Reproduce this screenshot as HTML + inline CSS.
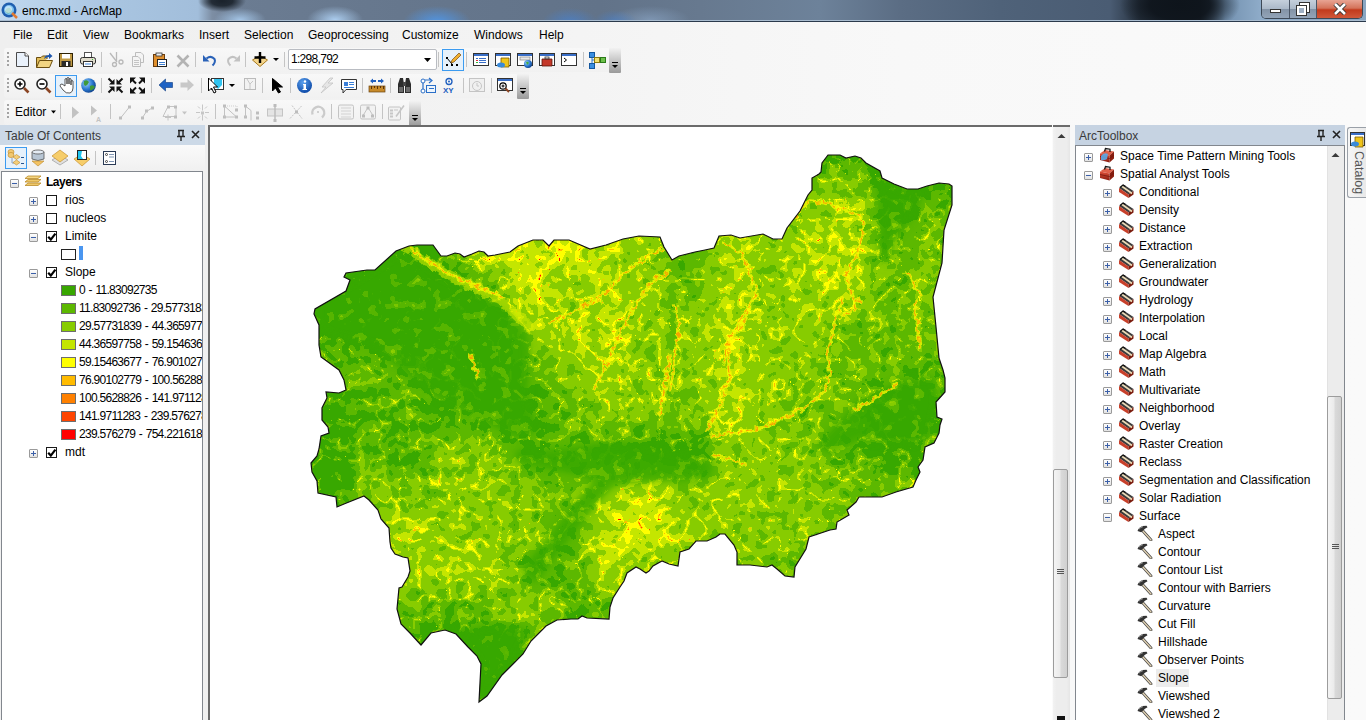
<!DOCTYPE html>
<html><head><meta charset="utf-8">
<style>
*{margin:0;padding:0;box-sizing:border-box}
html,body{width:1366px;height:720px;overflow:hidden;background:linear-gradient(90deg,#efefef 0px,#f3f3f3 500px,#f8f8f8 900px,#fafafa 1366px);font-family:"Liberation Sans",sans-serif;font-size:12px;color:#000}
.a{position:absolute}
#title{left:0;top:0;width:1366px;height:22px;background:
radial-gradient(ellipse 24px 11px at 222px 1px,#1a222b 0%,rgba(26,34,43,.9) 45%,rgba(26,34,43,0) 100%),
radial-gradient(ellipse 26px 12px at 240px 20px,rgba(170,205,240,.9) 0%,rgba(170,205,240,0) 100%),
radial-gradient(ellipse 28px 14px at 335px 20px,rgba(175,210,245,.95) 0%,rgba(175,210,245,0) 100%),
radial-gradient(ellipse 34px 16px at 437px 22px,rgba(80,150,230,.95) 0%,rgba(80,150,230,0) 100%),
radial-gradient(ellipse 28px 14px at 570px 22px,rgba(70,130,210,.7) 0%,rgba(70,130,210,0) 100%),
radial-gradient(ellipse 22px 12px at 615px 22px,rgba(70,130,210,.6) 0%,rgba(70,130,210,0) 100%),
radial-gradient(ellipse 40px 14px at 650px 20px,rgba(150,180,215,.5) 0%,rgba(150,180,215,0) 100%),
radial-gradient(ellipse 60px 30px at 1180px 5px,#0e141b 0%,rgba(14,20,27,.9) 50%,rgba(14,20,27,0) 100%),
linear-gradient(90deg,#c0d8ef 0px,#a8c4e0 120px,#a2bedb 198px,#7d8ea4 212px,#6b7c92 235px,#66778d 400px,#627389 600px,#67798f 700px,#6d829a 820px,#5b6d84 900px,#4f6279 1000px,#4a5c73 1110px,#26313e 1140px,#1a222c 1200px,#7391b0 1225px,#8eabc8 1260px,#8aa6c2 1366px);}
#title .bot{left:0;top:20px;width:1366px;height:1px;background:#a9bccf}
#title .bot2{left:0;top:21px;width:1366px;height:1px;background:#2b3a4c}
.ttxt{left:22px;top:4px;font-size:12px;color:#000;white-space:nowrap}
.menu{top:28px;font-size:12px;white-space:nowrap}
.tb{background:#f5f5f5;border-radius:3px}
.sep{width:1px;background:#c6c6c6}
.grip{width:2px;background:repeating-linear-gradient(180deg,#a0a0a0 0 2px,transparent 2px 4px)}
.chev{background:linear-gradient(180deg,#f0f0f0,#9d9d9d);border-radius:0 3px 3px 0}
.panelhdr{font-size:12px;color:#3a3a3a;white-space:nowrap}
.tree{background:#fff}
.row{white-space:nowrap;font-size:12px}
.pm{width:9px;height:9px;border:1px solid #9a9a9a;background:linear-gradient(180deg,#fff,#e2e2e2);border-radius:1px}
.pm::before{content:"";position:absolute;left:1px;top:3px;width:5px;height:1px;background:#3b5fa8}
.pm.p::after{content:"";position:absolute;left:3px;top:1px;width:1px;height:5px;background:#3b5fa8}
.cb{width:11px;height:11px;border:1px solid #1a1a1a;background:#fff}
.num{letter-spacing:-0.72px;word-spacing:1px}
.sw{width:15px;height:11px;border:1px solid #6e6e6e}
</style></head><body>
<!-- TITLE BAR -->
<div id="title" class="a">
  <div class="a bot"></div><div class="a bot2"></div>
  <svg class="a" style="left:1px;top:2px" width="18" height="18" viewBox="0 0 18 18">
    <circle cx="8" cy="8" r="7.5" fill="#1f5fb0"/><circle cx="8" cy="8" r="5" fill="#7fc4ef"/><path d="M4 9 Q6 5 9 6 L11 9 Q9 12 6 11Z" fill="#3a9d3a" opacity=".8"/><circle cx="7.5" cy="7.5" r="3.6" fill="#d6eeff" opacity=".75"/><path d="M11 11 L16 16" stroke="#e07a30" stroke-width="2.5"/>
  </svg>
  <div class="a ttxt">emc.mxd - ArcMap</div>
  <!-- window buttons -->
  <div class="a" style="left:1261px;top:0;width:102px;height:19px;border:1px solid #3c4856;border-top:none;border-radius:0 0 5px 5px;overflow:hidden">
    <div class="a" style="left:0;top:0;width:27px;height:18px;background:linear-gradient(180deg,#c5d0dc 0,#aab8c8 50%,#8393a6 51%,#93a4b8 100%)"></div>
    <div class="a" style="left:27px;top:0;width:1px;height:18px;background:#4a5666"></div>
    <div class="a" style="left:28px;top:0;width:26px;height:18px;background:linear-gradient(180deg,#c5d0dc 0,#aab8c8 50%,#8393a6 51%,#93a4b8 100%)"></div>
    <div class="a" style="left:54px;top:0;width:1px;height:18px;background:#4a5666"></div>
    <div class="a" style="left:55px;top:0;width:47px;height:18px;background:linear-gradient(180deg,#e8a493 0,#d4735a 45%,#c23a1c 55%,#d0583a 100%)"></div>
    <div class="a" style="left:8px;top:9px;width:11px;height:4px;background:#fff;border:1px solid #333"></div>
    <div class="a" style="left:38px;top:3px;width:9px;height:9px;border:2px solid #fff;outline:1px solid #333"></div>
    <div class="a" style="left:35px;top:6px;width:9px;height:9px;border:2px solid #fff;outline:1px solid #333;background:#9fb0c4"></div>
    <svg class="a" style="left:70px;top:3px" width="16" height="12" viewBox="0 0 16 12"><path d="M3 1 L13 11 M13 1 L3 11" stroke="#333" stroke-width="4.4"/><path d="M3 1 L13 11 M13 1 L3 11" stroke="#fff" stroke-width="2.6"/></svg>
  </div>
</div>
<!-- MENU -->
<div class="a menu" style="left:13px">File</div>
<div class="a menu" style="left:47px">Edit</div>
<div class="a menu" style="left:83px">View</div>
<div class="a menu" style="left:124px">Bookmarks</div>
<div class="a menu" style="left:199px">Insert</div>
<div class="a menu" style="left:244px">Selection</div>
<div class="a menu" style="left:308px">Geoprocessing</div>
<div class="a menu" style="left:402px">Customize</div>
<div class="a menu" style="left:474px">Windows</div>
<div class="a menu" style="left:539px">Help</div>

<!-- TOOLBARS placeholder -->
<div class="a" style="left:4px;top:48px;width:606px;height:24px;background:linear-gradient(180deg,#f8f8f8,#f1f1f1);border-radius:3px 0 0 3px"></div>
<div class="a" style="left:4px;top:74px;width:514px;height:24px;background:linear-gradient(180deg,#f8f8f8,#f1f1f1);border-radius:3px 0 0 3px"></div>
<div class="a" style="left:4px;top:100px;width:406px;height:25px;background:linear-gradient(180deg,#f8f8f8,#f1f1f1);border-radius:3px 0 0 3px"></div>
<!-- combo -->
<div class="a" style="left:288px;top:49px;width:149px;height:21px;background:#fff;border:1px solid #b9bcc2;border-radius:2px"></div>
<div class="a" style="left:291px;top:52px;font-size:12px;white-space:nowrap;letter-spacing:-0.7px">1:298,792</div>
<div class="a" style="left:15px;top:105px;font-size:12px;white-space:nowrap">Editor</div>
<svg class="a" style="left:0;top:44px" width="640" height="82" viewBox="0 44 640 82">
<defs>
<linearGradient id="chg" x1="0" y1="0" x2="0" y2="1"><stop offset="0" stop-color="#f2f2f2"/><stop offset="1" stop-color="#9a9a9a"/></linearGradient>
<radialGradient id="glb" cx=".35" cy=".35" r=".7"><stop offset="0" stop-color="#9fd3ff"/><stop offset=".6" stop-color="#2a78d0"/><stop offset="1" stop-color="#0d3f8a"/></radialGradient>
<radialGradient id="inf" cx=".4" cy=".3" r=".7"><stop offset="0" stop-color="#5aa0ee"/><stop offset="1" stop-color="#0d4aa8"/></radialGradient>
</defs>
<!-- grips -->
<g fill="#a3a3a3">
<rect x="7" y="52" width="2" height="2"/><rect x="7" y="56" width="2" height="2"/><rect x="7" y="60" width="2" height="2"/><rect x="7" y="64" width="2" height="2"/>
<rect x="7" y="78" width="2" height="2"/><rect x="7" y="82" width="2" height="2"/><rect x="7" y="86" width="2" height="2"/><rect x="7" y="90" width="2" height="2"/>
<rect x="7" y="104" width="2" height="2"/><rect x="7" y="108" width="2" height="2"/><rect x="7" y="112" width="2" height="2"/><rect x="7" y="116" width="2" height="2"/>
</g>
<!-- separators -->
<g fill="#c4c4c4">
<rect x="101" y="52" width="1" height="15"/><rect x="195" y="52" width="1" height="15"/><rect x="245" y="52" width="1" height="15"/><rect x="284" y="52" width="1" height="15"/><rect x="438" y="52" width="1" height="15"/><rect x="466" y="52" width="1" height="15"/><rect x="583" y="52" width="1" height="15"/>
<rect x="101" y="78" width="1" height="15"/><rect x="151" y="78" width="1" height="15"/><rect x="201" y="78" width="1" height="15"/><rect x="262" y="78" width="1" height="15"/><rect x="290" y="78" width="1" height="15"/><rect x="362" y="78" width="1" height="15"/><rect x="390" y="78" width="1" height="15"/><rect x="463" y="78" width="1" height="15"/><rect x="491" y="78" width="1" height="15"/>
<rect x="60" y="104" width="1" height="15"/><rect x="110" y="104" width="1" height="15"/><rect x="215" y="104" width="1" height="15"/><rect x="331" y="104" width="1" height="15"/><rect x="382" y="104" width="1" height="15"/>
</g>
<!-- chevrons -->
<g>
<rect x="609" y="48" width="12" height="25" fill="url(#chg)" rx="1"/><rect x="612" y="62" width="6" height="1" fill="#000"/><path d="M612 65 H618 L615 68Z" fill="#000"/>
<rect x="517" y="74" width="12" height="25" fill="url(#chg)" rx="1"/><rect x="520" y="88" width="6" height="1" fill="#000"/><path d="M520 91 H526 L523 94Z" fill="#000"/>
<rect x="409" y="101" width="12" height="25" fill="url(#chg)" rx="1"/><rect x="412" y="115" width="6" height="1" fill="#000"/><path d="M412 118 H418 L415 121Z" fill="#000"/>
</g>
<!-- ROW 1 -->
<path d="M16.5 52.5 H25 L28.5 56 V66.5 H16.5Z" fill="#e9f1fb" stroke="#4a4a4a"/><path d="M25 52.5 V56 H28.5" fill="#fff" stroke="#4a4a4a"/>
<path d="M36.5 67.5 V57.5 H41 L42.5 56 H47 V59" fill="#e2bd5a" stroke="#6b4e10"/><path d="M36.5 67.5 L39.5 60.5 H52.5 L49.5 67.5Z" fill="#f2d582" stroke="#6b4e10"/><path d="M44 59 Q45 55 49 55 V53 L52.5 56 L49 59 V57 Q46.5 57 44 59Z" fill="#1d56ad"/>
<rect x="59.5" y="53.5" width="13" height="13" fill="#c09a45" stroke="#2d2104"/><rect x="62" y="54" width="8" height="4.5" fill="#fff"/><rect x="61.5" y="61" width="9" height="5.5" fill="#2a2a2a"/><rect x="66" y="62" width="2" height="4" fill="#fff"/>
<rect x="84.5" y="52.5" width="7" height="6" fill="#fff" stroke="#555"/><rect x="80.5" y="57.5" width="15" height="6.5" rx="2" fill="#e0dccd" stroke="#2e2e2e"/><rect x="83.5" y="61.5" width="9" height="5" fill="#fff" stroke="#333"/><rect x="85" y="63.5" width="6" height="1" fill="#3d82d6"/><rect x="92" y="59" width="1" height="1" fill="#39c439"/>
<g stroke="#b9b9b9" fill="none" stroke-width="1.3"><path d="M110 53 L117 62"/><path d="M116.5 52 V61"/><circle cx="114.5" cy="64.5" r="2"/><circle cx="121" cy="62" r="2"/></g>
<g stroke="#bdbdbd" fill="#f4f4f4"><path d="M135.5 52.5 H141 L143.5 55 V62.5 H135.5Z"/><path d="M132.5 56.5 H138 L140.5 59 V66.5 H132.5Z"/></g><g fill="#c4c4c4"><rect x="134" y="60" width="5" height="1"/><rect x="134" y="62" width="5" height="1"/><rect x="134" y="64" width="5" height="1"/></g>
<rect x="153.5" y="54.5" width="11" height="12" fill="#e0902e" stroke="#6a3c0c"/><rect x="156" y="53" width="6" height="3" fill="#eee" stroke="#333" stroke-width=".8"/><rect x="157.5" y="59.5" width="9" height="7" fill="#fff" stroke="#222"/><rect x="159" y="62" width="6" height="1" fill="#3f7fd0"/><rect x="159" y="64" width="6" height="1" fill="#3f7fd0"/>
<path d="M177.5 55.5 L188.5 66.5 M188.5 55.5 L177.5 66.5" stroke="#b3b3b3" stroke-width="2.6"/>
<path d="M206.5 58.5 Q211 55 214.5 59 Q216 62 212.5 65.5" stroke="#2a62b8" stroke-width="2" fill="none"/><path d="M203 55 V61.5 H209.5Z" fill="#2a62b8"/>
<path d="M236.5 58.5 Q232 55 228.5 59 Q227 62 230.5 65.5" stroke="#c2c2c2" stroke-width="2" fill="none"/><path d="M240 55 V61.5 H233.5Z" fill="#c2c2c2"/>
<path d="M252.5 60 L260 55.5 L267.5 60 L260 66.5Z" fill="#f4d58c" stroke="#a87a1e"/><path d="M260 52 V63 M254.5 57.5 H265.5" stroke="#000" stroke-width="2.4"/>
<path d="M273 58 H279 L276 61Z" fill="#000"/>
<path d="M424 58 H431 L427.5 62Z" fill="#000"/>
<rect x="442.5" y="49.5" width="21" height="21" fill="#e6f1fb" stroke="#3c9bf0"/>
<g fill="#000"><rect x="446" y="57" width="2" height="2"/><rect x="446" y="64" width="2" height="2"/><rect x="451" y="64" width="2" height="2"/><rect x="456" y="64" width="2" height="2"/></g><path d="M447 58 L452 64" stroke="#000"/><path d="M452 60 L459 53 L461 55 L454 62 L451 63Z" fill="#f0b030" stroke="#7a4a10" stroke-width=".7"/>
<g stroke="#333" fill="#fff"><rect x="473.5" y="53.5" width="15" height="12"/><rect x="495.5" y="53.5" width="15" height="12"/><rect x="517.5" y="53.5" width="15" height="12"/><rect x="539.5" y="53.5" width="15" height="12"/><rect x="561.5" y="53.5" width="15" height="12"/></g>
<g fill="#3a6fc8"><rect x="474" y="54" width="14" height="2"/><rect x="496" y="54" width="14" height="2"/><rect x="518" y="54" width="14" height="2"/><rect x="540" y="54" width="14" height="2"/><rect x="562" y="54" width="14" height="2"/></g>
<rect x="476" y="58" width="2" height="1" fill="#3a6fc8"/><rect x="479" y="58" width="7" height="1" fill="#3a6fc8"/><rect x="476" y="60" width="2" height="1" fill="#d33"/><rect x="479" y="60" width="7" height="1" fill="#3a6fc8"/><rect x="476" y="62" width="2" height="1" fill="#3b3"/><rect x="479" y="62" width="7" height="1" fill="#3a6fc8"/>
<path d="M501 58 H509 V67 H501Z" fill="#f0c419" stroke="#7a5a00" stroke-width=".8"/><ellipse cx="501" cy="65" rx="4" ry="2.5" fill="#3a8ad8"/>
<rect x="520" y="57" width="10" height="3" fill="#e8e8e8" stroke="#888" stroke-width=".7"/><circle cx="528" cy="64" r="4" fill="url(#glb)"/><path d="M526 62 Q528 61 529 63 L527 65Z" fill="#4a4"/>
<path d="M542 59 H552 V66 H542Z" fill="#c4382a" stroke="#5a1408" stroke-width=".8"/><rect x="545" y="57" width="4" height="2" fill="none" stroke="#333" stroke-width=".8"/>
<path d="M564 58 L566.5 60 L564 62" stroke="#000" fill="none"/>
<g stroke="#2f78c8" stroke-width="1"><path d="M592 55 V66 M592 60 H602"/></g><rect x="589.5" y="52.5" width="5" height="5" fill="#3a8ee0" stroke="#14579e"/><rect x="589.5" y="63.5" width="5" height="5" fill="#3a8ee0" stroke="#14579e"/><rect x="594.5" y="57.5" width="5" height="5" fill="#f3e070" stroke="#8a7a10"/><rect x="600.5" y="57.5" width="5" height="5" fill="#6cc04a" stroke="#2a7a18"/>
<!-- ROW 2 -->
<g><circle cx="20" cy="84" r="5" fill="#fff" stroke="#222" stroke-width="1.6"/><path d="M17.5 84 H22.5 M20 81.5 V86.5" stroke="#000" stroke-width="1.6"/><path d="M24 88 L28.5 92.5" stroke="#8b4524" stroke-width="2.6"/></g>
<g><circle cx="42" cy="84" r="5" fill="#fff" stroke="#222" stroke-width="1.6"/><path d="M39.5 84 H44.5" stroke="#000" stroke-width="1.6"/><path d="M46 88 L50.5 92.5" stroke="#8b4524" stroke-width="2.6"/></g>
<rect x="55.5" y="75.5" width="21" height="21" fill="#e6f1fb" stroke="#3c9bf0"/>
<path d="M60 86 L63 90 Q66 94 70 93 Q73 92 73 88 V81 Q72 80 71 81 V85 V79 Q70 78 69 79 V84 V78 Q68 77 67 78 V84 V79 Q66 78 65 79 V86 L62 84 Q60 84 60 86Z" fill="#fff" stroke="#444" stroke-width=".9"/>
<circle cx="88.5" cy="85.5" r="7.3" fill="url(#glb)"/><path d="M84 81 Q87 79 89 82 Q88 85 85 86 Q83 84 84 81Z M90 86 Q93 84 95 87 Q93 91 90 90Z" fill="#3f9a3a"/>
<g fill="#111"><path d="M114.5 84.5 V79 L109 84.5Z M116.5 84.5 V79 L122 84.5Z M114.5 86.5 V92 L109 86.5Z M116.5 86.5 V92 L122 86.5Z"/></g><g stroke="#111" stroke-width="2"><path d="M108.5 78.5 L112.5 82.5 M122.5 78.5 L118.5 82.5 M108.5 92.5 L112.5 88.5 M122.5 92.5 L118.5 88.5"/></g>
<g fill="#111"><path d="M130 77.5 H136 L130 83.5Z M145 77.5 H139 L145 83.5Z M130 93.5 H136 L130 87.5Z M145 93.5 H139 L145 87.5Z"/></g><g stroke="#111" stroke-width="2"><path d="M131.5 79 L136 83.5 M143.5 79 L139 83.5 M131.5 92 L136 87.5 M143.5 92 L139 87.5"/></g>
<path d="M159 85 L165.5 79 V82.5 H172.5 V87.5 H165.5 V91Z" fill="#1f63c4" stroke="#0d3a80" stroke-width=".6"/>
<path d="M194 85 L187.5 79 V82.5 H180.5 V87.5 H187.5 V91Z" fill="#c8c8c8"/>
<rect x="211.5" y="78.5" width="12" height="11" fill="#fff" stroke="#333"/><path d="M214 79 L222 79 L222 85 L218 89 L214 84Z" fill="#31c4f0"/><path d="M208.5 78 L208.5 91 L211.5 88 L214 93 L216 92 L213.5 87 L217.5 87Z" fill="#fff" stroke="#000" stroke-width="1"/>
<path d="M229 84 H235 L232 87Z" fill="#000"/>
<rect x="244.5" y="78.5" width="11" height="11" fill="#f2f2f2" stroke="#bbb"/><path d="M247 79 L250 84 L253 81 M250 84 V89" stroke="#c6c6c6" fill="none"/>
<path d="M272.5 78.5 V91 L275.5 88 L278.5 93 L280.5 92 L277.5 87 L282.5 87Z" fill="#000" stroke="#000"/>
<circle cx="304.5" cy="85.5" r="7.5" fill="url(#inf)"/><circle cx="305" cy="81.5" r="1.2" fill="#fff"/><path d="M303 84 H306 V89 H307 V90 H302.5 V89 H303.5 V85 H303Z" fill="#fff"/>
<path d="M330 78 L322 87 H326 L321 93 L333 83 H328 L333 78Z" fill="#e6e6e6" stroke="#c4c4c4" stroke-width=".8"/>
<path d="M341.5 79.5 H356.5 V89.5 H346 L343 93 V89.5 H341.5Z" fill="#fff" stroke="#333"/><rect x="344" y="82" width="4" height="4" fill="#3a7fd8"/><rect x="349" y="82" width="5" height="1" fill="#3a7fd8"/><rect x="349" y="84" width="5" height="1" fill="#3a7fd8"/><rect x="344" y="87" width="10" height="1" fill="#3a7fd8"/>
<path d="M370 81 L373 78.5 V80 H376 V82 H373 V83.5Z M384 81 L381 78.5 V80 H378 V82 H381 V83.5Z" fill="#1f5fbf"/><rect x="369" y="86" width="16" height="6" fill="#c78a2a" stroke="#6b4210" stroke-width=".7"/><g fill="#5a3208"><rect x="371" y="86" width="1" height="3"/><rect x="374" y="86" width="1" height="2"/><rect x="377" y="86" width="1" height="3"/><rect x="380" y="86" width="1" height="2"/><rect x="383" y="86" width="1" height="3"/></g>
<path d="M398 93 V84 L400 78 H403 L404 84 V93Z M405 93 V84 L406 78 H409 L411 84 V93Z" fill="#2c2c2c"/><rect x="403" y="82" width="3" height="4" fill="#444"/><rect x="399" y="87" width="4" height="5" fill="#6a6a6a"/><rect x="406" y="87" width="4" height="5" fill="#6a6a6a"/>
<circle cx="423" cy="81" r="2" fill="#fff" stroke="#2a6fc8"/><circle cx="423" cy="91" r="2" fill="#fff" stroke="#2a6fc8"/><path d="M423 83 V89 M425 80 H431 M429 78 L432 80.5 L429 83" stroke="#2a6fc8" fill="none" stroke-width="1.2"/><rect x="426.5" y="85.5" width="9" height="7" fill="#eef5fc" stroke="#2a6fc8"/><rect x="429" y="88" width="5" height="1" fill="#2a6fc8"/>
<circle cx="449" cy="81.5" r="3" fill="none" stroke="#1f5fbf" stroke-width="1.3"/><circle cx="449" cy="81.5" r="1" fill="#1f5fbf"/><text x="443" y="93" font-family="Liberation Sans" font-weight="bold" font-size="8" fill="#1f5fbf">XY</text>
<rect x="469.5" y="78.5" width="15" height="13" fill="#f0f0f0" stroke="#c4c4c4"/><circle cx="477" cy="86" r="4.5" fill="none" stroke="#c6c6c6"/><path d="M477 83 V86 H479" stroke="#c6c6c6" fill="none"/>
<rect x="497.5" y="78.5" width="15" height="12" fill="#fff" stroke="#333"/><rect x="498" y="79" width="14" height="2" fill="#3a6fc8"/><circle cx="503" cy="86" r="3.2" fill="#fff" stroke="#000" stroke-width="1.2"/><path d="M501.5 86 H504.5 M503 84.5 V87.5" stroke="#000"/><path d="M505.5 88.5 L509 92" stroke="#8b4524" stroke-width="2"/>
<!-- ROW 3 -->
<g transform="translate(0,1.5)">
<path d="M51 109 H56 L53.5 112Z" fill="#000"/>
<path d="M72 105 V117 L79 111Z" fill="#c2c2c2"/>
<path d="M91 104 V114 L97 109Z" fill="#c2c2c2"/><text x="96" y="120" font-family="Liberation Sans" font-weight="bold" font-size="7" fill="#c2c2c2">A</text>
<g fill="#bdbdbd"><rect x="119" y="115" width="3" height="3"/><rect x="128" y="104" width="3" height="3"/><rect x="141" y="115" width="3" height="3"/><rect x="145" y="108" width="3" height="3"/><rect x="151" y="105" width="3" height="3"/></g><path d="M121 116 L129 106 M142.5 116 L146.5 110 L152 106.5" stroke="#c2c2c2" fill="none"/>
<path d="M168 105 L176 105 L176 115 L163 115Z" fill="none" stroke="#c4c4c4"/><g fill="#bdbdbd"><rect x="167" y="104" width="3" height="3"/><rect x="174" y="104" width="3" height="3"/><rect x="174" y="114" width="3" height="3"/></g><path d="M168 113 V119 M165 116 H171" stroke="#c4c4c4"/><path d="M182 110 H187 L184.5 113Z" fill="#c4c4c4"/>
<g stroke="#c6c6c6" fill="none"><path d="M202.5 103 V109 M202.5 113 V119 M196 111 H200 M205 111 H209 M198 105 L200 107 M207 105 L205 107 M198 117 L200 115 M207 117 L205 115"/></g><rect x="201" y="110" width="3" height="3" fill="#c6c6c6"/>
<g fill="#bdbdbd"><rect x="223" y="103" width="3" height="3"/><rect x="235" y="114" width="3" height="3"/><rect x="223" y="114" width="3" height="3"/><rect x="235" y="107" width="3" height="3"/></g><path d="M224.5 105 V115.5 H236.5 M225 105 L236 115" stroke="#c2c2c2" fill="none"/><path d="M227 104.5 H237 V108" stroke="#cfcfcf" stroke-dasharray="1 1" fill="none"/>
<g fill="#bdbdbd"><rect x="244" y="103" width="3" height="3"/><rect x="244" y="114" width="3" height="3"/><rect x="256" y="110" width="3" height="3"/><rect x="256" y="115" width="3" height="3"/></g><path d="M245.5 105 V115.5 M246 105 L251 109 V119" stroke="#c2c2c2" fill="none"/>
<rect x="267.5" y="107.5" width="15" height="7" fill="#e4e4e4" stroke="#c4c4c4"/><path d="M275 103 V120" stroke="#bcbcbc" stroke-width="1.5"/><rect x="273.5" y="102.5" width="3" height="3" fill="#bcbcbc"/><rect x="273.5" y="117.5" width="3" height="3" fill="#bcbcbc"/>
<path d="M290 117 L302 104 M292 104 L302 117" stroke="#c6c6c6" fill="none" stroke-dasharray="2 1"/><rect x="295" y="109" width="3" height="3" fill="#bcbcbc"/>
<path d="M312.5 113 A6 6 0 1 1 322 116" stroke="#cbcbcb" stroke-width="2.4" fill="none"/><circle cx="318" cy="110.5" r="1" fill="#c4c4c4"/>
<rect x="338.5" y="103.5" width="15" height="14" rx="1.5" fill="#f2f2f2" stroke="#c4c4c4"/><g fill="#d2d2d2"><rect x="341" y="106" width="10" height="1"/><rect x="341" y="109" width="10" height="1"/><rect x="341" y="112" width="10" height="1"/><rect x="341" y="115" width="10" height="1"/></g>
<rect x="360.5" y="103.5" width="15" height="14" rx="1.5" fill="#f2f2f2" stroke="#c4c4c4"/><path d="M363 114 L368 106 L373 114" stroke="#c4c4c4" fill="none"/><g fill="#bdbdbd"><rect x="362" y="113" width="3" height="3"/><rect x="366.5" y="105" width="3" height="3"/><rect x="371" y="113" width="3" height="3"/></g>
<rect x="388.5" y="105.5" width="12" height="13" rx="1" fill="#f2f2f2" stroke="#c4c4c4"/><g fill="#c6c6c6"><rect x="390" y="108" width="3" height="2"/><rect x="390" y="111" width="3" height="2"/><rect x="390" y="114" width="3" height="2"/><rect x="394" y="108" width="4" height="1"/></g><path d="M396 115 L404 104" stroke="#c6c6c6" stroke-width="1.6"/>
</g>
</svg>


<!-- TOC PANEL -->
<div class="a" style="left:0;top:125px;width:205px;height:20px;background:#ccd9e7"></div>
<div class="a panelhdr" style="left:5px;top:129px">Table Of Contents</div>
<svg class="a" style="left:176px;top:128px" width="30" height="14" viewBox="0 0 30 14"><path d="M2 2.5 H8 M3 2 V8 M7 2 V8 M1 8.5 H9 M5 9 V13" stroke="#222" stroke-width="1.4" fill="none"/><path d="M16 3 L23 10 M23 3 L16 10" stroke="#222" stroke-width="1.6"/></svg>
<div class="a" style="left:0;top:145px;width:205px;height:26px;background:linear-gradient(180deg,#fafafa,#f0f0f0)"></div>
<svg class="a" style="left:0;top:145px" width="125" height="26" viewBox="0 145 125 26">
<rect x="5.5" y="147.5" width="21" height="21" fill="#e6f1fb" stroke="#3c9bf0"/>
<ellipse cx="11" cy="152" rx="3" ry="2.6" fill="#f1c870" stroke="#c08a2a" stroke-width=".6"/><ellipse cx="11" cy="155" rx="3" ry="2.6" fill="#f1c870" stroke="#c08a2a" stroke-width=".6"/>
<path d="M12 158 V163 H14" stroke="#8aa0c0" fill="none"/><path d="M13 157 L16.5 154.5 L20 157 L16.5 159.5Z M13 162.5 L16.5 160 L20 162.5 L16.5 165Z" fill="#f4cf7a" stroke="#c08a2a" stroke-width=".6"/><rect x="21" y="157" width="3" height="1" fill="#23528f"/><rect x="21" y="163" width="3" height="1" fill="#23528f"/>
<path d="M32 152 V159 Q38 162 44 159 V152" fill="#b8c6d4" stroke="#555" stroke-width=".8"/><ellipse cx="38" cy="152" rx="6" ry="2" fill="#e4ecf4" stroke="#555" stroke-width=".8"/><path d="M32 161 H44 L38 166Z" fill="#f3c262" stroke="#b9862a" stroke-width=".6"/>
<path d="M52 160 L60 155 L68 160 L60 165Z" fill="#e0e0e0" stroke="#999" stroke-width=".7"/><path d="M52 156 L60 150 L68 156 L60 162Z" fill="#f6cd6a" stroke="#c7902c" stroke-width=".7"/>
<path d="M74 159 L82 154 L90 159 L82 166Z" fill="#f6cd6a" stroke="#c7902c" stroke-width=".7"/><rect x="77.5" y="150.5" width="9" height="9" fill="#fff" stroke="#222"/><path d="M78 151 H82 L81 156 L83 159 H78Z" fill="#1ec4ec"/>
<rect x="95" y="151" width="1" height="14" fill="#c4c4c4"/>
<rect x="103.5" y="151.5" width="12" height="13" fill="#fff" stroke="#2a3a55"/><circle cx="106.5" cy="154.5" r="1" fill="none" stroke="#222" stroke-width=".8"/><circle cx="106.5" cy="161.5" r="1" fill="none" stroke="#222" stroke-width=".8"/><g fill="#7f95b3"><rect x="109" y="154" width="5" height="1"/><rect x="109" y="156.5" width="5" height="1"/><rect x="109" y="161" width="5" height="1"/></g>
</svg>
<div class="a tree" style="left:1px;top:171px;width:202px;height:549px;border:1px solid #82878e;border-bottom:none;overflow:hidden">
<div style="position:absolute;left:-2px;top:-172px;width:205px;height:720px">
<div class="a pm" style="left:10px;top:179px"></div>
<svg class="a" style="left:24px;top:175px" width="18" height="14" viewBox="0 0 18 14"><path d="M1 10.5 L4 8 H17 L14 10.5Z" fill="#f0c96a" stroke="#b98a2a" stroke-width=".8"/><path d="M1 7 L4 4.5 H17 L14 7Z" fill="#f0c96a" stroke="#b98a2a" stroke-width=".8"/><path d="M1 3.5 L4 1 H17 L14 3.5Z" fill="#f6d682" stroke="#b98a2a" stroke-width=".8"/></svg>
<div class="a row" style="left:46px;top:175px;font-weight:bold;letter-spacing:-0.5px">Layers</div>
<div class="a pm p" style="left:29px;top:197px"></div><div class="a cb" style="left:46px;top:195px"></div><div class="a row" style="left:65px;top:193px">rios</div>
<div class="a pm p" style="left:29px;top:215px"></div><div class="a cb" style="left:46px;top:213px"></div><div class="a row" style="left:65px;top:211px">nucleos</div>
<div class="a pm" style="left:29px;top:233px"></div><div class="a cb" style="left:46px;top:231px"></div><svg class="a" style="left:47px;top:232px" width="10" height="10" viewBox="0 0 10 10"><path d="M1.2 4.8 L3.8 7.6 L8.4 1.6" stroke="#000" stroke-width="2.2" fill="none"/></svg><div class="a row" style="left:65px;top:229px">Limite</div>
<div class="a" style="left:61px;top:249px;width:15px;height:11px;border:1px solid #222;background:#fff"></div><div class="a" style="left:79px;top:246px;width:4px;height:14px;background:#4a96f0"></div>
<div class="a pm" style="left:29px;top:269px"></div><div class="a cb" style="left:46px;top:267px"></div><svg class="a" style="left:47px;top:268px" width="10" height="10" viewBox="0 0 10 10"><path d="M1.2 4.8 L3.8 7.6 L8.4 1.6" stroke="#000" stroke-width="2.2" fill="none"/></svg><div class="a row" style="left:65px;top:265px">Slope</div>
<div class="a sw" style="left:61px;top:285px;background:#38a600"></div><div class="a row num" style="left:79px;top:283px">0 - 11.83092735</div>
<div class="a sw" style="left:61px;top:303px;background:#5cb800"></div><div class="a row num" style="left:79px;top:301px">11.83092736 - 29.57731838</div>
<div class="a sw" style="left:61px;top:321px;background:#88cc00"></div><div class="a row num" style="left:79px;top:319px">29.57731839 - 44.36597757</div>
<div class="a sw" style="left:61px;top:339px;background:#c4e600"></div><div class="a row num" style="left:79px;top:337px">44.36597758 - 59.15463676</div>
<div class="a sw" style="left:61px;top:357px;background:#ffff00"></div><div class="a row num" style="left:79px;top:355px">59.15463677 - 76.90102778</div>
<div class="a sw" style="left:61px;top:375px;background:#ffbb00"></div><div class="a row num" style="left:79px;top:373px">76.90102779 - 100.5628825</div>
<div class="a sw" style="left:61px;top:393px;background:#ff8000"></div><div class="a row num" style="left:79px;top:391px">100.5628826 - 141.9711282</div>
<div class="a sw" style="left:61px;top:411px;background:#ff4500"></div><div class="a row num" style="left:79px;top:409px">141.9711283 - 239.5762789</div>
<div class="a sw" style="left:61px;top:429px;background:#ff0000"></div><div class="a row num" style="left:79px;top:427px">239.576279 - 754.2216187</div>
<div class="a pm p" style="left:29px;top:449px"></div><div class="a cb" style="left:46px;top:447px"></div><svg class="a" style="left:47px;top:448px" width="10" height="10" viewBox="0 0 10 10"><path d="M1.2 4.8 L3.8 7.6 L8.4 1.6" stroke="#000" stroke-width="2.2" fill="none"/></svg><div class="a row" style="left:65px;top:445px">mdt</div>
</div>
</div>
<!-- splitter -->
<div class="a" style="left:205px;top:125px;width:3px;height:595px;background:#f0f0f0"></div>

<!-- MAP -->
<div class="a" style="left:208px;top:125px;width:844px;height:595px;background:#fff;border-left:2px solid #6b6b6b;border-top:2px solid #6b6b6b"></div>
<div class="a" style="left:1052px;top:125px;width:1px;height:595px;background:#fbfbfb"></div>
<div class="a" style="left:1053px;top:125px;width:17px;height:595px;background:#ededed;border-top:2px solid #6b6b6b"></div>
<svg class="a" style="left:0;top:0" width="1366" height="720" viewBox="0 0 1366 720">
<defs><clipPath id="cp"><path d="M322 420 L322 408 L327 398 L326 392 L339 393 L346 390 L344 380 L339 370 L321 357 L319 345 L319 325 L314 314 L315 309 L346 291 L350 280 L344 277 L346 273 L367 270 L375 270 L396 251 L409 246 L417 245 L433 245 L441 256 L447 256 L455 253 L460 254 L464 257 L472 254 L479 251 L484 252 L488 256 L495 255 L510 252 L518 246 L533 240 L543 240 L549 246 L554 240 L569 240 L576 243 L590 249 L606 245 L623 239 L639 236 L660 237 L664 247 L672 260 L679 256 L695 252 L705 250 L714 248 L719 236 L731 235 L740 238 L763 234 L773 239 L782 239 L787 228 L800 211 L808 195 L812 190 L812 178 L819 174 L821 172 L822 163 L828 155 L840 155 L846 158 L855 156 L861 158 L866 163 L880 171 L882 178 L894 184 L907 189 L918 189 L927 186 L939 183 L949 184 L952 186 L952 205 L944 230 L942 263 L933 297 L936 327 L939 358 L943 370 L945 378 L945 392 L936 402 L937 417 L942 419 L940 425 L939 433 L934 443 L925 447 L923 460 L918 467 L920 472 L916 480 L913 487 L896 492 L882 497 L859 497 L856 502 L847 510 L849 515 L837 522 L836 529 L830 530 L815 535 L809 537 L806 549 L795 567 L794 577 L785 576 L777 569 L772 565 L767 567 L750 565 L737 565 L737 552 L734 545 L725 534 L720 534 L716 537 L707 541 L696 541 L689 549 L680 552 L678 566 L669 564 L662 561 L653 566 L649 571 L646 573 L640 569 L636 567 L627 573 L624 581 L620 587 L613 598 L610 607 L609 619 L587 618 L582 616 L578 619 L571 619 L557 620 L546 626 L531 641 L523 654 L513 664 L502 675 L487 696 L479 702 L481 664 L477 656 L468 647 L456 634 L445 630 L431 633 L421 645 L410 633 L401 624 L397 609 L399 588 L402 587 L408 577 L410 571 L408 558 L403 557 L395 554 L391 548 L390 542 L389 528 L381 519 L378 510 L369 500 L364 496 L344 504 L337 507 L336 497 L318 493 L317 481 L312 472 L311 463 L317 456 L319 449 L321 436 L329 433 L328 427Z"/></clipPath>
<filter id="slp" filterUnits="userSpaceOnUse" x="300" y="150" width="660" height="560" color-interpolation-filters="sRGB">
<feGaussianBlur in="SourceGraphic" stdDeviation="13" result="zm"/>
<feTurbulence type="fractalNoise" baseFrequency="0.09" numOctaves="2" seed="11" result="n0"/>
<feColorMatrix in="n0" type="matrix" values="1 0 0 0 0  1 0 0 0 0  1 0 0 0 0  0 0 0 0 1" result="n"/>
<feTurbulence type="turbulence" baseFrequency="0.05" numOctaves="2" seed="5" result="t0"/>
<feColorMatrix in="t0" type="matrix" values="-1 0 0 0 1  -1 0 0 0 1  -1 0 0 0 1  0 0 0 0 1" result="t1"/>
<feComponentTransfer in="t1" result="rid"><feFuncR type="gamma" amplitude="1" exponent="14" offset="0"/><feFuncG type="gamma" amplitude="1" exponent="14" offset="0"/><feFuncB type="gamma" amplitude="1" exponent="14" offset="0"/></feComponentTransfer>
<feComposite in="zm" in2="n" operator="arithmetic" k1="0" k2="1" k3="0.42" k4="-0.21" result="c0"/>
<feComposite in="c0" in2="rid" operator="arithmetic" k1="0.1" k2="1" k3="0.3" k4="0" result="c"/>
<feComponentTransfer in="c"><feFuncR type="discrete" tableValues="0.220 0.220 0.220 0.220 0.220 0.220 0.220 0.220 0.220 0.220 0.220 0.220 0.220 0.220 0.220 0.220 0.220 0.220 0.220 0.220 0.220 0.220 0.220 0.220 0.220 0.220 0.220 0.220 0.220 0.220 0.361 0.361 0.361 0.361 0.361 0.361 0.361 0.361 0.361 0.361 0.361 0.361 0.533 0.533 0.533 0.533 0.533 0.533 0.533 0.533 0.533 0.533 0.533 0.533 0.533 0.533 0.769 0.769 0.769 0.769 0.769 0.769 0.769 0.769 0.769 0.769 0.769 0.769 1.000 1.000 1.000 1.000 1.000 1.000 1.000 1.000 1.000 1.000 1.000 1.000 1.000 1.000 1.000 1.000 1.000 1.000 1.000 1.000 1.000 1.000 1.000 1.000 1.000 1.000 1.000 1.000 1.000 1.000 1.000 1.000 1.000 1.000 1.000 1.000"/><feFuncG type="discrete" tableValues="0.659 0.659 0.659 0.659 0.659 0.659 0.659 0.659 0.659 0.659 0.659 0.659 0.659 0.659 0.659 0.659 0.659 0.659 0.659 0.659 0.659 0.659 0.659 0.659 0.659 0.659 0.659 0.659 0.659 0.659 0.722 0.722 0.722 0.722 0.722 0.722 0.722 0.722 0.722 0.722 0.722 0.722 0.800 0.800 0.800 0.800 0.800 0.800 0.800 0.800 0.800 0.800 0.800 0.800 0.800 0.800 0.902 0.902 0.902 0.902 0.902 0.902 0.902 0.902 0.902 0.902 0.902 0.902 1.000 1.000 1.000 1.000 1.000 1.000 1.000 1.000 1.000 1.000 1.000 1.000 1.000 1.000 1.000 1.000 1.000 1.000 1.000 1.000 0.733 0.733 0.733 0.733 0.733 0.733 0.733 0.733 0.502 0.502 0.502 0.502 0.271 0.271 0.271 0.000"/><feFuncB type="discrete" tableValues="0"/><feFuncA type="identity"/></feComponentTransfer>
</filter>
<filter id="slp2" filterUnits="userSpaceOnUse" x="300" y="150" width="660" height="560" color-interpolation-filters="sRGB">
<feGaussianBlur in="SourceGraphic" stdDeviation="5" result="zb"/>
<feColorMatrix in="zb" type="matrix" values="0 0 0 0 0.2  0 0 0 0 0.2  0 0 0 0 0.2  0 0 0 1 0" result="zm"/>
<feTurbulence type="fractalNoise" baseFrequency="0.09" numOctaves="2" seed="11" result="n0"/>
<feColorMatrix in="n0" type="matrix" values="1 0 0 0 0  1 0 0 0 0  1 0 0 0 0  0 0 0 0 1" result="n"/>
<feComposite in="zm" in2="n" operator="arithmetic" k1="0" k2="1" k3="0.7" k4="-0.35" result="c0"/>
<feComponentTransfer in="c0" result="pc"><feFuncR type="discrete" tableValues="0.220 0.220 0.220 0.220 0.220 0.220 0.220 0.220 0.220 0.220 0.220 0.220 0.220 0.220 0.220 0.220 0.220 0.220 0.220 0.220 0.220 0.220 0.220 0.220 0.220 0.220 0.220 0.220 0.220 0.220 0.361 0.361 0.361 0.361 0.361 0.361 0.361 0.361 0.361 0.361 0.361 0.361 0.533 0.533 0.533 0.533 0.533 0.533 0.533 0.533 0.533 0.533 0.533 0.533 0.533 0.533 0.769 0.769 0.769 0.769 0.769 0.769 0.769 0.769 0.769 0.769 0.769 0.769 1.000 1.000 1.000 1.000 1.000 1.000 1.000 1.000 1.000 1.000 1.000 1.000 1.000 1.000 1.000 1.000 1.000 1.000 1.000 1.000 1.000 1.000 1.000 1.000 1.000 1.000 1.000 1.000 1.000 1.000 1.000 1.000 1.000 1.000 1.000 1.000"/><feFuncG type="discrete" tableValues="0.659 0.659 0.659 0.659 0.659 0.659 0.659 0.659 0.659 0.659 0.659 0.659 0.659 0.659 0.659 0.659 0.659 0.659 0.659 0.659 0.659 0.659 0.659 0.659 0.659 0.659 0.659 0.659 0.659 0.659 0.722 0.722 0.722 0.722 0.722 0.722 0.722 0.722 0.722 0.722 0.722 0.722 0.800 0.800 0.800 0.800 0.800 0.800 0.800 0.800 0.800 0.800 0.800 0.800 0.800 0.800 0.902 0.902 0.902 0.902 0.902 0.902 0.902 0.902 0.902 0.902 0.902 0.902 1.000 1.000 1.000 1.000 1.000 1.000 1.000 1.000 1.000 1.000 1.000 1.000 1.000 1.000 1.000 1.000 1.000 1.000 1.000 1.000 0.733 0.733 0.733 0.733 0.733 0.733 0.733 0.733 0.502 0.502 0.502 0.502 0.271 0.271 0.271 0.000"/><feFuncB type="discrete" tableValues="0"/><feFuncA type="identity"/></feComponentTransfer>
<feComposite in="pc" in2="zb" operator="in"/>
</filter>
<filter id="wig" filterUnits="userSpaceOnUse" x="300" y="150" width="660" height="560"><feTurbulence type="fractalNoise" baseFrequency="0.15" numOctaves="2" seed="3" result="w"/><feDisplacementMap in="SourceGraphic" in2="w" scale="9" xChannelSelector="R" yChannelSelector="G"/></filter>
</defs>
<g clip-path="url(#cp)">
<g filter="url(#slp)">
<rect x="300" y="150" width="660" height="560" fill="rgb(76,76,76)"/>
<rect x="310" y="150" width="40" height="40" fill="rgb(15,15,15)"/>
<rect x="350" y="150" width="40" height="40" fill="rgb(16,16,16)"/>
<rect x="390" y="150" width="40" height="40" fill="rgb(15,15,15)"/>
<rect x="430" y="150" width="40" height="40" fill="rgb(33,33,33)"/>
<rect x="470" y="150" width="40" height="40" fill="rgb(70,70,70)"/>
<rect x="510" y="150" width="40" height="40" fill="rgb(99,99,99)"/>
<rect x="550" y="150" width="40" height="40" fill="rgb(121,121,121)"/>
<rect x="590" y="150" width="40" height="40" fill="rgb(131,131,131)"/>
<rect x="630" y="150" width="40" height="40" fill="rgb(128,128,128)"/>
<rect x="670" y="150" width="40" height="40" fill="rgb(112,112,112)"/>
<rect x="710" y="150" width="40" height="40" fill="rgb(105,105,105)"/>
<rect x="750" y="150" width="40" height="40" fill="rgb(88,88,88)"/>
<rect x="790" y="150" width="40" height="40" fill="rgb(88,88,88)"/>
<rect x="830" y="150" width="40" height="40" fill="rgb(88,88,88)"/>
<rect x="870" y="150" width="40" height="40" fill="rgb(64,64,64)"/>
<rect x="910" y="150" width="40" height="40" fill="rgb(64,64,64)"/>
<rect x="310" y="190" width="40" height="40" fill="rgb(15,15,15)"/>
<rect x="350" y="190" width="40" height="40" fill="rgb(17,17,17)"/>
<rect x="390" y="190" width="40" height="40" fill="rgb(15,15,15)"/>
<rect x="430" y="190" width="40" height="40" fill="rgb(52,52,52)"/>
<rect x="470" y="190" width="40" height="40" fill="rgb(106,106,106)"/>
<rect x="510" y="190" width="40" height="40" fill="rgb(127,127,127)"/>
<rect x="550" y="190" width="40" height="40" fill="rgb(144,144,144)"/>
<rect x="590" y="190" width="40" height="40" fill="rgb(140,140,140)"/>
<rect x="630" y="190" width="40" height="40" fill="rgb(126,126,126)"/>
<rect x="670" y="190" width="40" height="40" fill="rgb(95,95,95)"/>
<rect x="710" y="190" width="40" height="40" fill="rgb(116,116,116)"/>
<rect x="750" y="190" width="40" height="40" fill="rgb(107,107,107)"/>
<rect x="790" y="190" width="40" height="40" fill="rgb(112,112,112)"/>
<rect x="830" y="190" width="40" height="40" fill="rgb(136,136,136)"/>
<rect x="870" y="190" width="40" height="40" fill="rgb(52,52,52)"/>
<rect x="910" y="190" width="40" height="40" fill="rgb(88,88,88)"/>
<rect x="310" y="230" width="40" height="40" fill="rgb(15,15,15)"/>
<rect x="350" y="230" width="40" height="40" fill="rgb(19,19,19)"/>
<rect x="390" y="230" width="40" height="40" fill="rgb(15,15,15)"/>
<rect x="430" y="230" width="40" height="40" fill="rgb(88,88,88)"/>
<rect x="470" y="230" width="40" height="40" fill="rgb(161,161,161)"/>
<rect x="510" y="230" width="40" height="40" fill="rgb(149,149,149)"/>
<rect x="550" y="230" width="40" height="40" fill="rgb(161,161,161)"/>
<rect x="590" y="230" width="40" height="40" fill="rgb(136,136,136)"/>
<rect x="630" y="230" width="40" height="40" fill="rgb(112,112,112)"/>
<rect x="670" y="230" width="40" height="40" fill="rgb(64,64,64)"/>
<rect x="710" y="230" width="40" height="40" fill="rgb(136,136,136)"/>
<rect x="750" y="230" width="40" height="40" fill="rgb(112,112,112)"/>
<rect x="790" y="230" width="40" height="40" fill="rgb(136,136,136)"/>
<rect x="830" y="230" width="40" height="40" fill="rgb(136,136,136)"/>
<rect x="870" y="230" width="40" height="40" fill="rgb(76,76,76)"/>
<rect x="910" y="230" width="40" height="40" fill="rgb(100,100,100)"/>
<rect x="310" y="270" width="40" height="40" fill="rgb(15,15,15)"/>
<rect x="350" y="270" width="40" height="40" fill="rgb(27,27,27)"/>
<rect x="390" y="270" width="40" height="40" fill="rgb(15,15,15)"/>
<rect x="430" y="270" width="40" height="40" fill="rgb(52,52,52)"/>
<rect x="470" y="270" width="40" height="40" fill="rgb(76,76,76)"/>
<rect x="510" y="270" width="40" height="40" fill="rgb(161,161,161)"/>
<rect x="550" y="270" width="40" height="40" fill="rgb(112,112,112)"/>
<rect x="590" y="270" width="40" height="40" fill="rgb(136,136,136)"/>
<rect x="630" y="270" width="40" height="40" fill="rgb(112,112,112)"/>
<rect x="670" y="270" width="40" height="40" fill="rgb(88,88,88)"/>
<rect x="710" y="270" width="40" height="40" fill="rgb(136,136,136)"/>
<rect x="750" y="270" width="40" height="40" fill="rgb(112,112,112)"/>
<rect x="790" y="270" width="40" height="40" fill="rgb(124,124,124)"/>
<rect x="830" y="270" width="40" height="40" fill="rgb(136,136,136)"/>
<rect x="870" y="270" width="40" height="40" fill="rgb(88,88,88)"/>
<rect x="910" y="270" width="40" height="40" fill="rgb(112,112,112)"/>
<rect x="310" y="310" width="40" height="40" fill="rgb(52,52,52)"/>
<rect x="350" y="310" width="40" height="40" fill="rgb(52,52,52)"/>
<rect x="390" y="310" width="40" height="40" fill="rgb(40,40,40)"/>
<rect x="430" y="310" width="40" height="40" fill="rgb(40,40,40)"/>
<rect x="470" y="310" width="40" height="40" fill="rgb(27,27,27)"/>
<rect x="510" y="310" width="40" height="40" fill="rgb(124,124,124)"/>
<rect x="550" y="310" width="40" height="40" fill="rgb(136,136,136)"/>
<rect x="590" y="310" width="40" height="40" fill="rgb(136,136,136)"/>
<rect x="630" y="310" width="40" height="40" fill="rgb(112,112,112)"/>
<rect x="670" y="310" width="40" height="40" fill="rgb(112,112,112)"/>
<rect x="710" y="310" width="40" height="40" fill="rgb(136,136,136)"/>
<rect x="750" y="310" width="40" height="40" fill="rgb(112,112,112)"/>
<rect x="790" y="310" width="40" height="40" fill="rgb(124,124,124)"/>
<rect x="830" y="310" width="40" height="40" fill="rgb(88,88,88)"/>
<rect x="870" y="310" width="40" height="40" fill="rgb(88,88,88)"/>
<rect x="910" y="310" width="40" height="40" fill="rgb(100,100,100)"/>
<rect x="310" y="350" width="40" height="40" fill="rgb(88,88,88)"/>
<rect x="350" y="350" width="40" height="40" fill="rgb(88,88,88)"/>
<rect x="390" y="350" width="40" height="40" fill="rgb(76,76,76)"/>
<rect x="430" y="350" width="40" height="40" fill="rgb(64,64,64)"/>
<rect x="470" y="350" width="40" height="40" fill="rgb(52,52,52)"/>
<rect x="510" y="350" width="40" height="40" fill="rgb(76,76,76)"/>
<rect x="550" y="350" width="40" height="40" fill="rgb(112,112,112)"/>
<rect x="590" y="350" width="40" height="40" fill="rgb(136,136,136)"/>
<rect x="630" y="350" width="40" height="40" fill="rgb(100,100,100)"/>
<rect x="670" y="350" width="40" height="40" fill="rgb(112,112,112)"/>
<rect x="710" y="350" width="40" height="40" fill="rgb(136,136,136)"/>
<rect x="750" y="350" width="40" height="40" fill="rgb(112,112,112)"/>
<rect x="790" y="350" width="40" height="40" fill="rgb(100,100,100)"/>
<rect x="830" y="350" width="40" height="40" fill="rgb(88,88,88)"/>
<rect x="870" y="350" width="40" height="40" fill="rgb(88,88,88)"/>
<rect x="910" y="350" width="40" height="40" fill="rgb(76,76,76)"/>
<rect x="310" y="390" width="40" height="40" fill="rgb(52,52,52)"/>
<rect x="350" y="390" width="40" height="40" fill="rgb(76,76,76)"/>
<rect x="390" y="390" width="40" height="40" fill="rgb(64,64,64)"/>
<rect x="430" y="390" width="40" height="40" fill="rgb(64,64,64)"/>
<rect x="470" y="390" width="40" height="40" fill="rgb(52,52,52)"/>
<rect x="510" y="390" width="40" height="40" fill="rgb(64,64,64)"/>
<rect x="550" y="390" width="40" height="40" fill="rgb(88,88,88)"/>
<rect x="590" y="390" width="40" height="40" fill="rgb(112,112,112)"/>
<rect x="630" y="390" width="40" height="40" fill="rgb(112,112,112)"/>
<rect x="670" y="390" width="40" height="40" fill="rgb(100,100,100)"/>
<rect x="710" y="390" width="40" height="40" fill="rgb(136,136,136)"/>
<rect x="750" y="390" width="40" height="40" fill="rgb(112,112,112)"/>
<rect x="790" y="390" width="40" height="40" fill="rgb(88,88,88)"/>
<rect x="830" y="390" width="40" height="40" fill="rgb(100,100,100)"/>
<rect x="870" y="390" width="40" height="40" fill="rgb(64,64,64)"/>
<rect x="910" y="390" width="40" height="40" fill="rgb(52,52,52)"/>
<rect x="310" y="430" width="40" height="40" fill="rgb(52,52,52)"/>
<rect x="350" y="430" width="40" height="40" fill="rgb(76,76,76)"/>
<rect x="390" y="430" width="40" height="40" fill="rgb(64,64,64)"/>
<rect x="430" y="430" width="40" height="40" fill="rgb(112,112,112)"/>
<rect x="470" y="430" width="40" height="40" fill="rgb(100,100,100)"/>
<rect x="510" y="430" width="40" height="40" fill="rgb(64,64,64)"/>
<rect x="550" y="430" width="40" height="40" fill="rgb(76,76,76)"/>
<rect x="590" y="430" width="40" height="40" fill="rgb(64,64,64)"/>
<rect x="630" y="430" width="40" height="40" fill="rgb(52,52,52)"/>
<rect x="670" y="430" width="40" height="40" fill="rgb(52,52,52)"/>
<rect x="710" y="430" width="40" height="40" fill="rgb(112,112,112)"/>
<rect x="750" y="430" width="40" height="40" fill="rgb(112,112,112)"/>
<rect x="790" y="430" width="40" height="40" fill="rgb(88,88,88)"/>
<rect x="830" y="430" width="40" height="40" fill="rgb(76,76,76)"/>
<rect x="870" y="430" width="40" height="40" fill="rgb(52,52,52)"/>
<rect x="910" y="430" width="40" height="40" fill="rgb(64,64,64)"/>
<rect x="310" y="470" width="40" height="40" fill="rgb(40,40,40)"/>
<rect x="350" y="470" width="40" height="40" fill="rgb(112,112,112)"/>
<rect x="390" y="470" width="40" height="40" fill="rgb(88,88,88)"/>
<rect x="430" y="470" width="40" height="40" fill="rgb(112,112,112)"/>
<rect x="470" y="470" width="40" height="40" fill="rgb(112,112,112)"/>
<rect x="510" y="470" width="40" height="40" fill="rgb(100,100,100)"/>
<rect x="550" y="470" width="40" height="40" fill="rgb(88,88,88)"/>
<rect x="590" y="470" width="40" height="40" fill="rgb(124,124,124)"/>
<rect x="630" y="470" width="40" height="40" fill="rgb(149,149,149)"/>
<rect x="670" y="470" width="40" height="40" fill="rgb(100,100,100)"/>
<rect x="710" y="470" width="40" height="40" fill="rgb(124,124,124)"/>
<rect x="750" y="470" width="40" height="40" fill="rgb(112,112,112)"/>
<rect x="790" y="470" width="40" height="40" fill="rgb(112,112,112)"/>
<rect x="830" y="470" width="40" height="40" fill="rgb(100,100,100)"/>
<rect x="870" y="470" width="40" height="40" fill="rgb(88,88,88)"/>
<rect x="910" y="470" width="40" height="40" fill="rgb(88,88,88)"/>
<rect x="310" y="510" width="40" height="40" fill="rgb(76,76,76)"/>
<rect x="350" y="510" width="40" height="40" fill="rgb(112,112,112)"/>
<rect x="390" y="510" width="40" height="40" fill="rgb(136,136,136)"/>
<rect x="430" y="510" width="40" height="40" fill="rgb(112,112,112)"/>
<rect x="470" y="510" width="40" height="40" fill="rgb(112,112,112)"/>
<rect x="510" y="510" width="40" height="40" fill="rgb(112,112,112)"/>
<rect x="550" y="510" width="40" height="40" fill="rgb(76,76,76)"/>
<rect x="590" y="510" width="40" height="40" fill="rgb(149,149,149)"/>
<rect x="630" y="510" width="40" height="40" fill="rgb(161,161,161)"/>
<rect x="670" y="510" width="40" height="40" fill="rgb(124,124,124)"/>
<rect x="710" y="510" width="40" height="40" fill="rgb(112,112,112)"/>
<rect x="750" y="510" width="40" height="40" fill="rgb(112,112,112)"/>
<rect x="790" y="510" width="40" height="40" fill="rgb(112,112,112)"/>
<rect x="830" y="510" width="40" height="40" fill="rgb(88,88,88)"/>
<rect x="870" y="510" width="40" height="40" fill="rgb(88,88,88)"/>
<rect x="910" y="510" width="40" height="40" fill="rgb(88,88,88)"/>
<rect x="310" y="550" width="40" height="40" fill="rgb(76,76,76)"/>
<rect x="350" y="550" width="40" height="40" fill="rgb(104,104,104)"/>
<rect x="390" y="550" width="40" height="40" fill="rgb(124,124,124)"/>
<rect x="430" y="550" width="40" height="40" fill="rgb(136,136,136)"/>
<rect x="470" y="550" width="40" height="40" fill="rgb(124,124,124)"/>
<rect x="510" y="550" width="40" height="40" fill="rgb(76,76,76)"/>
<rect x="550" y="550" width="40" height="40" fill="rgb(76,76,76)"/>
<rect x="590" y="550" width="40" height="40" fill="rgb(149,149,149)"/>
<rect x="630" y="550" width="40" height="40" fill="rgb(100,100,100)"/>
<rect x="670" y="550" width="40" height="40" fill="rgb(112,112,112)"/>
<rect x="710" y="550" width="40" height="40" fill="rgb(112,112,112)"/>
<rect x="750" y="550" width="40" height="40" fill="rgb(100,100,100)"/>
<rect x="790" y="550" width="40" height="40" fill="rgb(76,76,76)"/>
<rect x="830" y="550" width="40" height="40" fill="rgb(82,82,82)"/>
<rect x="870" y="550" width="40" height="40" fill="rgb(85,85,85)"/>
<rect x="910" y="550" width="40" height="40" fill="rgb(86,86,86)"/>
<rect x="310" y="590" width="40" height="40" fill="rgb(76,76,76)"/>
<rect x="350" y="590" width="40" height="40" fill="rgb(89,89,89)"/>
<rect x="390" y="590" width="40" height="40" fill="rgb(88,88,88)"/>
<rect x="430" y="590" width="40" height="40" fill="rgb(76,76,76)"/>
<rect x="470" y="590" width="40" height="40" fill="rgb(88,88,88)"/>
<rect x="510" y="590" width="40" height="40" fill="rgb(124,124,124)"/>
<rect x="550" y="590" width="40" height="40" fill="rgb(64,64,64)"/>
<rect x="590" y="590" width="40" height="40" fill="rgb(76,76,76)"/>
<rect x="630" y="590" width="40" height="40" fill="rgb(88,88,88)"/>
<rect x="670" y="590" width="40" height="40" fill="rgb(100,100,100)"/>
<rect x="710" y="590" width="40" height="40" fill="rgb(106,106,106)"/>
<rect x="750" y="590" width="40" height="40" fill="rgb(103,103,103)"/>
<rect x="790" y="590" width="40" height="40" fill="rgb(89,89,89)"/>
<rect x="830" y="590" width="40" height="40" fill="rgb(86,86,86)"/>
<rect x="870" y="590" width="40" height="40" fill="rgb(85,85,85)"/>
<rect x="910" y="590" width="40" height="40" fill="rgb(86,86,86)"/>
<rect x="310" y="630" width="40" height="40" fill="rgb(76,76,76)"/>
<rect x="350" y="630" width="40" height="40" fill="rgb(76,76,76)"/>
<rect x="390" y="630" width="40" height="40" fill="rgb(64,64,64)"/>
<rect x="430" y="630" width="40" height="40" fill="rgb(40,40,40)"/>
<rect x="470" y="630" width="40" height="40" fill="rgb(27,27,27)"/>
<rect x="510" y="630" width="40" height="40" fill="rgb(76,76,76)"/>
<rect x="550" y="630" width="40" height="40" fill="rgb(70,70,70)"/>
<rect x="590" y="630" width="40" height="40" fill="rgb(73,73,73)"/>
<rect x="630" y="630" width="40" height="40" fill="rgb(80,80,80)"/>
<rect x="670" y="630" width="40" height="40" fill="rgb(90,90,90)"/>
<rect x="710" y="630" width="40" height="40" fill="rgb(98,98,98)"/>
<rect x="750" y="630" width="40" height="40" fill="rgb(101,101,101)"/>
<rect x="790" y="630" width="40" height="40" fill="rgb(95,95,95)"/>
<rect x="830" y="630" width="40" height="40" fill="rgb(90,90,90)"/>
<rect x="870" y="630" width="40" height="40" fill="rgb(88,88,88)"/>
<rect x="910" y="630" width="40" height="40" fill="rgb(87,87,87)"/>
<rect x="310" y="670" width="40" height="40" fill="rgb(76,76,76)"/>
<rect x="350" y="670" width="40" height="40" fill="rgb(76,76,76)"/>
<rect x="390" y="670" width="40" height="40" fill="rgb(56,56,56)"/>
<rect x="430" y="670" width="40" height="40" fill="rgb(27,27,27)"/>
<rect x="470" y="670" width="40" height="40" fill="rgb(27,27,27)"/>
<rect x="510" y="670" width="40" height="40" fill="rgb(52,52,52)"/>
<rect x="550" y="670" width="40" height="40" fill="rgb(61,61,61)"/>
<rect x="590" y="670" width="40" height="40" fill="rgb(67,67,67)"/>
<rect x="630" y="670" width="40" height="40" fill="rgb(74,74,74)"/>
<rect x="670" y="670" width="40" height="40" fill="rgb(82,82,82)"/>
<rect x="710" y="670" width="40" height="40" fill="rgb(90,90,90)"/>
<rect x="750" y="670" width="40" height="40" fill="rgb(95,95,95)"/>
<rect x="790" y="670" width="40" height="40" fill="rgb(95,95,95)"/>
<rect x="830" y="670" width="40" height="40" fill="rgb(93,93,93)"/>
<rect x="870" y="670" width="40" height="40" fill="rgb(90,90,90)"/>
<rect x="910" y="670" width="40" height="40" fill="rgb(89,89,89)"/>
</g>
<g filter="url(#slp2)" opacity="0.85">
<path d="M316 300 L346 285 L394 255 L412 250 L440 275 L500 303 L525 325 L530 350 L528 400 L540 430 L520 440 L480 420 L440 400 L400 370 L370 345 L330 335 L316 325Z" fill="rgb(26,26,26)"/>
<path d="M515 448 L540 450 L579 446 L612 441 L650 446 L714 461 L710 479 L650 483 L612 486 L577 475 L540 468 L515 462Z" fill="rgb(26,26,26)"/>
<path d="M857 400 L900 380 L934 375 L938 400 L930 440 L900 445 L860 440 L830 455 L815 445 L840 420Z" fill="rgb(26,26,26)"/>
<path d="M446 632 L490 625 L530 628 L520 650 L495 685 L480 700 L478 660 L457 640Z" fill="rgb(26,26,26)"/>
<path d="M875 175 L900 188 L926 188 L915 215 L895 240 L885 270 L878 250 L880 215Z" fill="rgb(26,26,26)"/>
<path d="M520 570 L550 535 L585 490 L625 455 L640 462 L600 500 L565 545 L535 585Z" fill="rgb(26,26,26)"/>
</g>
<g filter="url(#wig)">
<path d="M405 247 L448 274 L501 300 L530 328" fill="none" stroke="#d8ee00" stroke-width="9" stroke-linejoin="round" stroke-linecap="round" opacity="0.55"/>
<path d="M707 430 L720 405 L730 375 L727 345 L745 320 L750 305" fill="none" stroke="#ffff00" stroke-width="3.5" stroke-linejoin="round" stroke-linecap="round" opacity="0.75"/>
<path d="M707 430 L720 405 L730 375 L727 345 L745 320 L750 305" fill="none" stroke="#ff9000" stroke-width="1.2" stroke-linejoin="round" stroke-linecap="round" opacity="0.8" stroke-dasharray="5 4"/>
<path d="M710 435 L740 432 L765 427 L790 415 L810 405 L825 390 L830 375 L827 350 L835 325 L842 300" fill="none" stroke="#ffff00" stroke-width="3.5" stroke-linejoin="round" stroke-linecap="round" opacity="0.75"/>
<path d="M710 435 L740 432 L765 427 L790 415 L810 405 L825 390 L830 375 L827 350 L835 325 L842 300" fill="none" stroke="#ff9000" stroke-width="1.2" stroke-linejoin="round" stroke-linecap="round" opacity="0.8" stroke-dasharray="5 4"/>
<path d="M860 300 L845 315" fill="none" stroke="#ffff00" stroke-width="3.5" stroke-linejoin="round" stroke-linecap="round" opacity="0.75"/>
<path d="M860 300 L845 315" fill="none" stroke="#ff9000" stroke-width="1.2" stroke-linejoin="round" stroke-linecap="round" opacity="0.8" stroke-dasharray="5 4"/>
<path d="M915 300 L920 350" fill="none" stroke="#ffff00" stroke-width="3.5" stroke-linejoin="round" stroke-linecap="round" opacity="0.75"/>
<path d="M915 300 L920 350" fill="none" stroke="#ff9000" stroke-width="1.2" stroke-linejoin="round" stroke-linecap="round" opacity="0.8" stroke-dasharray="5 4"/>
<path d="M715 455 L745 465" fill="none" stroke="#ffff00" stroke-width="3.5" stroke-linejoin="round" stroke-linecap="round" opacity="0.75"/>
<path d="M715 455 L745 465" fill="none" stroke="#ff9000" stroke-width="1.2" stroke-linejoin="round" stroke-linecap="round" opacity="0.8" stroke-dasharray="5 4"/>
<path d="M670 355 L660 415" fill="none" stroke="#ffff00" stroke-width="3.5" stroke-linejoin="round" stroke-linecap="round" opacity="0.75"/>
<path d="M670 355 L660 415" fill="none" stroke="#ff9000" stroke-width="1.2" stroke-linejoin="round" stroke-linecap="round" opacity="0.8" stroke-dasharray="5 4"/>
<path d="M855 410 L897 385" fill="none" stroke="#ffff00" stroke-width="3.5" stroke-linejoin="round" stroke-linecap="round" opacity="0.75"/>
<path d="M855 410 L897 385" fill="none" stroke="#ff9000" stroke-width="1.2" stroke-linejoin="round" stroke-linecap="round" opacity="0.8" stroke-dasharray="5 4"/>
<path d="M550 323 L590 303 L608 292 L623 274 L648 257 L663 248" fill="none" stroke="#ffff00" stroke-width="3.5" stroke-linejoin="round" stroke-linecap="round" opacity="0.75"/>
<path d="M550 323 L590 303 L608 292 L623 274 L648 257 L663 248" fill="none" stroke="#ff9000" stroke-width="1.2" stroke-linejoin="round" stroke-linecap="round" opacity="0.8" stroke-dasharray="5 4"/>
<path d="M594 390 L617 341 L634 308 L648 286 L670 270" fill="none" stroke="#ffff00" stroke-width="3.5" stroke-linejoin="round" stroke-linecap="round" opacity="0.75"/>
<path d="M594 390 L617 341 L634 308 L648 286 L670 270" fill="none" stroke="#ff9000" stroke-width="1.2" stroke-linejoin="round" stroke-linecap="round" opacity="0.8" stroke-dasharray="5 4"/>
<path d="M670 390 L679 330 L674 306" fill="none" stroke="#ffff00" stroke-width="3.5" stroke-linejoin="round" stroke-linecap="round" opacity="0.75"/>
<path d="M670 390 L679 330 L674 306" fill="none" stroke="#ff9000" stroke-width="1.2" stroke-linejoin="round" stroke-linecap="round" opacity="0.8" stroke-dasharray="5 4"/>
<path d="M723 363 L728 341 L746 310 L757 292 L750 274 L741 252 L725 243" fill="none" stroke="#ffff00" stroke-width="3.5" stroke-linejoin="round" stroke-linecap="round" opacity="0.75"/>
<path d="M723 363 L728 341 L746 310 L757 292 L750 274 L741 252 L725 243" fill="none" stroke="#ff9000" stroke-width="1.2" stroke-linejoin="round" stroke-linecap="round" opacity="0.8" stroke-dasharray="5 4"/>
<path d="M857 310 L846 274 L857 254 L863 234 L861 217" fill="none" stroke="#ffff00" stroke-width="3.5" stroke-linejoin="round" stroke-linecap="round" opacity="0.75"/>
<path d="M857 310 L846 274 L857 254 L863 234 L861 217" fill="none" stroke="#ff9000" stroke-width="1.2" stroke-linejoin="round" stroke-linecap="round" opacity="0.8" stroke-dasharray="5 4"/>
<path d="M794 217 L810 201 L826 203 L863 217" fill="none" stroke="#ffff00" stroke-width="3.5" stroke-linejoin="round" stroke-linecap="round" opacity="0.75"/>
<path d="M794 217 L810 201 L826 203 L863 217" fill="none" stroke="#ff9000" stroke-width="1.2" stroke-linejoin="round" stroke-linecap="round" opacity="0.8" stroke-dasharray="5 4"/>
<path d="M906 274 L923 297" fill="none" stroke="#ffff00" stroke-width="3.5" stroke-linejoin="round" stroke-linecap="round" opacity="0.75"/>
<path d="M906 274 L923 297" fill="none" stroke="#ff9000" stroke-width="1.2" stroke-linejoin="round" stroke-linecap="round" opacity="0.8" stroke-dasharray="5 4"/>
<path d="M470 354 L479 377" fill="none" stroke="#ffff00" stroke-width="3.5" stroke-linejoin="round" stroke-linecap="round" opacity="0.75"/>
<path d="M470 354 L479 377" fill="none" stroke="#ff9000" stroke-width="1.2" stroke-linejoin="round" stroke-linecap="round" opacity="0.8" stroke-dasharray="5 4"/>
<path d="M412 250 L448 274 L501 297" fill="none" stroke="#ffff00" stroke-width="3.5" stroke-linejoin="round" stroke-linecap="round" opacity="0.75"/>
<path d="M412 250 L448 274 L501 297" fill="none" stroke="#ff9000" stroke-width="1.2" stroke-linejoin="round" stroke-linecap="round" opacity="0.8" stroke-dasharray="5 4"/>
</g>
</g>
<path d="M322 420 L322 408 L327 398 L326 392 L339 393 L346 390 L344 380 L339 370 L321 357 L319 345 L319 325 L314 314 L315 309 L346 291 L350 280 L344 277 L346 273 L367 270 L375 270 L396 251 L409 246 L417 245 L433 245 L441 256 L447 256 L455 253 L460 254 L464 257 L472 254 L479 251 L484 252 L488 256 L495 255 L510 252 L518 246 L533 240 L543 240 L549 246 L554 240 L569 240 L576 243 L590 249 L606 245 L623 239 L639 236 L660 237 L664 247 L672 260 L679 256 L695 252 L705 250 L714 248 L719 236 L731 235 L740 238 L763 234 L773 239 L782 239 L787 228 L800 211 L808 195 L812 190 L812 178 L819 174 L821 172 L822 163 L828 155 L840 155 L846 158 L855 156 L861 158 L866 163 L880 171 L882 178 L894 184 L907 189 L918 189 L927 186 L939 183 L949 184 L952 186 L952 205 L944 230 L942 263 L933 297 L936 327 L939 358 L943 370 L945 378 L945 392 L936 402 L937 417 L942 419 L940 425 L939 433 L934 443 L925 447 L923 460 L918 467 L920 472 L916 480 L913 487 L896 492 L882 497 L859 497 L856 502 L847 510 L849 515 L837 522 L836 529 L830 530 L815 535 L809 537 L806 549 L795 567 L794 577 L785 576 L777 569 L772 565 L767 567 L750 565 L737 565 L737 552 L734 545 L725 534 L720 534 L716 537 L707 541 L696 541 L689 549 L680 552 L678 566 L669 564 L662 561 L653 566 L649 571 L646 573 L640 569 L636 567 L627 573 L624 581 L620 587 L613 598 L610 607 L609 619 L587 618 L582 616 L578 619 L571 619 L557 620 L546 626 L531 641 L523 654 L513 664 L502 675 L487 696 L479 702 L481 664 L477 656 L468 647 L456 634 L445 630 L431 633 L421 645 L410 633 L401 624 L397 609 L399 588 L402 587 L408 577 L410 571 L408 558 L403 557 L395 554 L391 548 L390 542 L389 528 L381 519 L378 510 L369 500 L364 496 L344 504 L337 507 L336 497 L318 493 L317 481 L312 472 L311 463 L317 456 L319 449 L321 436 L329 433 L328 427Z" fill="none" stroke="#111" stroke-width="1.2"/>
</svg>
<div class="a" style="left:1053px;top:127px;width:17px;height:593px;background:linear-gradient(90deg,#f2f2f2,#ededed 20%,#ededed 80%,#e6e6e6)"></div>
<svg class="a" style="left:1057px;top:133px" width="9" height="6" viewBox="0 0 9 6"><path d="M0.5 5 L4.5 1 L8.5 5Z" fill="#3a3a3a"/></svg>
<div class="a" style="left:1053px;top:469px;width:15px;height:209px;background:linear-gradient(90deg,#f4f4f4,#ebebeb 45%,#d9d9d9 55%,#d0d0d0);border:1px solid #9c9c9c;border-radius:2px"></div>
<div class="a" style="left:1057px;top:569px;width:7px;height:1px;background:#555;box-shadow:0 2px 0 #555,0 4px 0 #555"></div>
<div class="a" style="left:1057px;top:716px;width:8px;height:4px;background:#111"></div>
<div class="a" style="left:1070px;top:125px;width:5px;height:595px;background:#f8f8f8"></div>

<!-- ARCTOOLBOX -->
<div class="a" style="left:1075px;top:125px;width:270px;height:20px;background:#c6d3e2"></div>
<div class="a panelhdr" style="left:1079px;top:129px">ArcToolbox</div>
<svg class="a" style="left:1316px;top:128px" width="30" height="14" viewBox="0 0 30 14"><path d="M2 2.5 H8 M3 2 V8 M7 2 V8 M1 8.5 H9 M5 9 V13" stroke="#222" stroke-width="1.4" fill="none"/><path d="M17 3 L24 10 M24 3 L17 10" stroke="#222" stroke-width="1.6"/></svg>
<div class="a tree" style="left:1075px;top:145px;width:270px;height:575px;border:1px solid #82878e;border-bottom:none;border-top:1px solid #82878e"></div>
<div class="a" style="left:1327px;top:146px;width:17px;height:574px;background:#ececec;border-left:1px solid #e2e2e2"></div>
<svg class="a" style="left:1331px;top:152px" width="9" height="6" viewBox="0 0 9 6"><path d="M0.5 5 L4.5 1 L8.5 5Z" fill="#3a3a3a"/></svg>
<div class="a" style="left:1327px;top:396px;width:15px;height:303px;background:linear-gradient(90deg,#f4f4f4,#ebebeb 45%,#d9d9d9 55%,#d0d0d0);border:1px solid #9c9c9c;border-radius:2px"></div>
<div class="a" style="left:1332px;top:544px;width:7px;height:1px;background:#555;box-shadow:0 2px 0 #555,0 4px 0 #555"></div>
<svg class="a" style="left:0;top:0;overflow:visible" width="1" height="1">
<defs>
<linearGradient id="tbr" x1="0" y1="0" x2="0" y2="1"><stop offset="0" stop-color="#e0503a"/><stop offset="1" stop-color="#8a1c10"/></linearGradient>
<symbol id="tbx" viewBox="0 0 16 16"><path d="M1 6.5 L6 3 L15 4.5 L10.5 8.5Z" fill="#e0604a"/><path d="M1 6.5 L10.5 8.5 V15.5 L1 13Z" fill="url(#tbr)"/><path d="M10.5 8.5 L15 4.5 V11.5 L10.5 15.5Z" fill="#8a1e10"/><path d="M5.5 4.5 L6.5 1.5 L11 2.2 L11 5" stroke="#1a1a1a" fill="none" stroke-width="1.3"/><path d="M1 9.5 L10.5 11.5 L15 8" stroke="#6a120a" fill="none" stroke-width=".7"/></symbol>
<symbol id="tsx" viewBox="0 0 16 16"><path d="M1 5 L5.5 1.5 L15.5 8 L10.5 11.5Z" fill="#3c3c3c"/><path d="M1 5 L10.5 11.5 V15 L1 9Z" fill="#c8402a"/><path d="M10.5 11.5 L15.5 8 V11.5 L10.5 15Z" fill="#7a1a0c"/><path d="M3.5 3 L14 10.5" stroke="#ecdcb8" stroke-width="1.6"/><path d="M2 4.5 L5 2 L7.5 3.5" stroke="#111" stroke-width="1.2" fill="none"/></symbol>
<symbol id="hmx" viewBox="0 0 16 16"><path d="M5.5 5.5 L14 15" stroke="#4a4a4a" stroke-width="2.8" stroke-linecap="round"/><path d="M5.5 5.5 L14 15" stroke="#e2d2b2" stroke-width="1.3" stroke-linecap="round"/><path d="M0.5 6 Q1.5 2.5 5.5 1 L9.5 0.8 L10.5 2.2 L8 3.8 L4.2 7.2 Z" fill="#333"/><path d="M2 4.2 Q3.5 2.2 6 1.6" stroke="#bbb" fill="none" stroke-width=".8"/></symbol>
</defs></svg>
<div class="a pm p" style="left:1084px;top:153px"></div>
<svg class="a" style="left:1099px;top:147px" width="16" height="16"><use href="#tbx"/></svg>
<svg class="a" style="left:1099px;top:147px" width="16" height="16" viewBox="0 0 16 16"><path d="M2 9 Q5 5 9 7 L8 12 Q5 14 2 13Z" fill="#5aa8e8" opacity=".9"/></svg>
<div class="a row" style="left:1120px;top:149px">Space Time Pattern Mining Tools</div>
<div class="a pm" style="left:1084px;top:171px"></div>
<svg class="a" style="left:1099px;top:165px" width="16" height="16"><use href="#tbx"/></svg>
<div class="a row" style="left:1120px;top:167px">Spatial Analyst Tools</div>
<div class="a pm p" style="left:1103px;top:189px"></div>
<svg class="a" style="left:1118px;top:183px" width="16" height="16"><use href="#tsx"/></svg>
<div class="a row" style="left:1139px;top:185px">Conditional</div>
<div class="a pm p" style="left:1103px;top:207px"></div>
<svg class="a" style="left:1118px;top:201px" width="16" height="16"><use href="#tsx"/></svg>
<div class="a row" style="left:1139px;top:203px">Density</div>
<div class="a pm p" style="left:1103px;top:225px"></div>
<svg class="a" style="left:1118px;top:219px" width="16" height="16"><use href="#tsx"/></svg>
<div class="a row" style="left:1139px;top:221px">Distance</div>
<div class="a pm p" style="left:1103px;top:243px"></div>
<svg class="a" style="left:1118px;top:237px" width="16" height="16"><use href="#tsx"/></svg>
<div class="a row" style="left:1139px;top:239px">Extraction</div>
<div class="a pm p" style="left:1103px;top:261px"></div>
<svg class="a" style="left:1118px;top:255px" width="16" height="16"><use href="#tsx"/></svg>
<div class="a row" style="left:1139px;top:257px">Generalization</div>
<div class="a pm p" style="left:1103px;top:279px"></div>
<svg class="a" style="left:1118px;top:273px" width="16" height="16"><use href="#tsx"/></svg>
<div class="a row" style="left:1139px;top:275px">Groundwater</div>
<div class="a pm p" style="left:1103px;top:297px"></div>
<svg class="a" style="left:1118px;top:291px" width="16" height="16"><use href="#tsx"/></svg>
<div class="a row" style="left:1139px;top:293px">Hydrology</div>
<div class="a pm p" style="left:1103px;top:315px"></div>
<svg class="a" style="left:1118px;top:309px" width="16" height="16"><use href="#tsx"/></svg>
<div class="a row" style="left:1139px;top:311px">Interpolation</div>
<div class="a pm p" style="left:1103px;top:333px"></div>
<svg class="a" style="left:1118px;top:327px" width="16" height="16"><use href="#tsx"/></svg>
<div class="a row" style="left:1139px;top:329px">Local</div>
<div class="a pm p" style="left:1103px;top:351px"></div>
<svg class="a" style="left:1118px;top:345px" width="16" height="16"><use href="#tsx"/></svg>
<div class="a row" style="left:1139px;top:347px">Map Algebra</div>
<div class="a pm p" style="left:1103px;top:369px"></div>
<svg class="a" style="left:1118px;top:363px" width="16" height="16"><use href="#tsx"/></svg>
<div class="a row" style="left:1139px;top:365px">Math</div>
<div class="a pm p" style="left:1103px;top:387px"></div>
<svg class="a" style="left:1118px;top:381px" width="16" height="16"><use href="#tsx"/></svg>
<div class="a row" style="left:1139px;top:383px">Multivariate</div>
<div class="a pm p" style="left:1103px;top:405px"></div>
<svg class="a" style="left:1118px;top:399px" width="16" height="16"><use href="#tsx"/></svg>
<div class="a row" style="left:1139px;top:401px">Neighborhood</div>
<div class="a pm p" style="left:1103px;top:423px"></div>
<svg class="a" style="left:1118px;top:417px" width="16" height="16"><use href="#tsx"/></svg>
<div class="a row" style="left:1139px;top:419px">Overlay</div>
<div class="a pm p" style="left:1103px;top:441px"></div>
<svg class="a" style="left:1118px;top:435px" width="16" height="16"><use href="#tsx"/></svg>
<div class="a row" style="left:1139px;top:437px">Raster Creation</div>
<div class="a pm p" style="left:1103px;top:459px"></div>
<svg class="a" style="left:1118px;top:453px" width="16" height="16"><use href="#tsx"/></svg>
<div class="a row" style="left:1139px;top:455px">Reclass</div>
<div class="a pm p" style="left:1103px;top:477px"></div>
<svg class="a" style="left:1118px;top:471px" width="16" height="16"><use href="#tsx"/></svg>
<div class="a row" style="left:1139px;top:473px">Segmentation and Classification</div>
<div class="a pm p" style="left:1103px;top:495px"></div>
<svg class="a" style="left:1118px;top:489px" width="16" height="16"><use href="#tsx"/></svg>
<div class="a row" style="left:1139px;top:491px">Solar Radiation</div>
<div class="a pm" style="left:1103px;top:513px"></div>
<svg class="a" style="left:1118px;top:507px" width="16" height="16"><use href="#tsx"/></svg>
<div class="a row" style="left:1139px;top:509px">Surface</div>
<svg class="a" style="left:1137px;top:525px" width="16" height="16"><use href="#hmx"/></svg>
<div class="a row" style="left:1158px;top:527px">Aspect</div>
<svg class="a" style="left:1137px;top:543px" width="16" height="16"><use href="#hmx"/></svg>
<div class="a row" style="left:1158px;top:545px">Contour</div>
<svg class="a" style="left:1137px;top:561px" width="16" height="16"><use href="#hmx"/></svg>
<div class="a row" style="left:1158px;top:563px">Contour List</div>
<svg class="a" style="left:1137px;top:579px" width="16" height="16"><use href="#hmx"/></svg>
<div class="a row" style="left:1158px;top:581px">Contour with Barriers</div>
<svg class="a" style="left:1137px;top:597px" width="16" height="16"><use href="#hmx"/></svg>
<div class="a row" style="left:1158px;top:599px">Curvature</div>
<svg class="a" style="left:1137px;top:615px" width="16" height="16"><use href="#hmx"/></svg>
<div class="a row" style="left:1158px;top:617px">Cut Fill</div>
<svg class="a" style="left:1137px;top:633px" width="16" height="16"><use href="#hmx"/></svg>
<div class="a row" style="left:1158px;top:635px">Hillshade</div>
<svg class="a" style="left:1137px;top:651px" width="16" height="16"><use href="#hmx"/></svg>
<div class="a row" style="left:1158px;top:653px">Observer Points</div>
<svg class="a" style="left:1137px;top:669px" width="16" height="16"><use href="#hmx"/></svg>
<div class="a" style="left:1156px;top:669px;width:33px;height:18px;background:#ececec"></div>
<div class="a row" style="left:1158px;top:671px">Slope</div>
<svg class="a" style="left:1137px;top:687px" width="16" height="16"><use href="#hmx"/></svg>
<div class="a row" style="left:1158px;top:689px">Viewshed</div>
<svg class="a" style="left:1137px;top:705px" width="16" height="16"><use href="#hmx"/></svg>
<div class="a row" style="left:1158px;top:707px">Viewshed 2</div>
<!-- catalog tab -->
<div class="a" style="left:1347px;top:127px;width:19px;height:71px;background:linear-gradient(90deg,#f6f6f6,#e9e9e9);border:1px solid #9aa0a8;border-right:none;border-radius:3px 0 0 3px"></div>
<svg class="a" style="left:1349px;top:131px" width="17" height="17" viewBox="0 0 17 17"><rect x="1.5" y="1.5" width="14" height="13" fill="#fff" stroke="#333"/><rect x="2" y="2" width="13" height="2" fill="#3a6fc8"/><path d="M6 6 H14 V16 H6Z" fill="#f0c419" stroke="#7a5a00" stroke-width=".8"/><ellipse cx="6" cy="13" rx="4" ry="2.5" fill="#3a8ad8"/></svg>
<div class="a" style="left:1350px;top:151px;width:44px;height:16px;transform-origin:0 0;transform:translate(16px,0) rotate(90deg);font-size:12.5px;color:#555;white-space:nowrap">Catalog</div>

</body></html>
